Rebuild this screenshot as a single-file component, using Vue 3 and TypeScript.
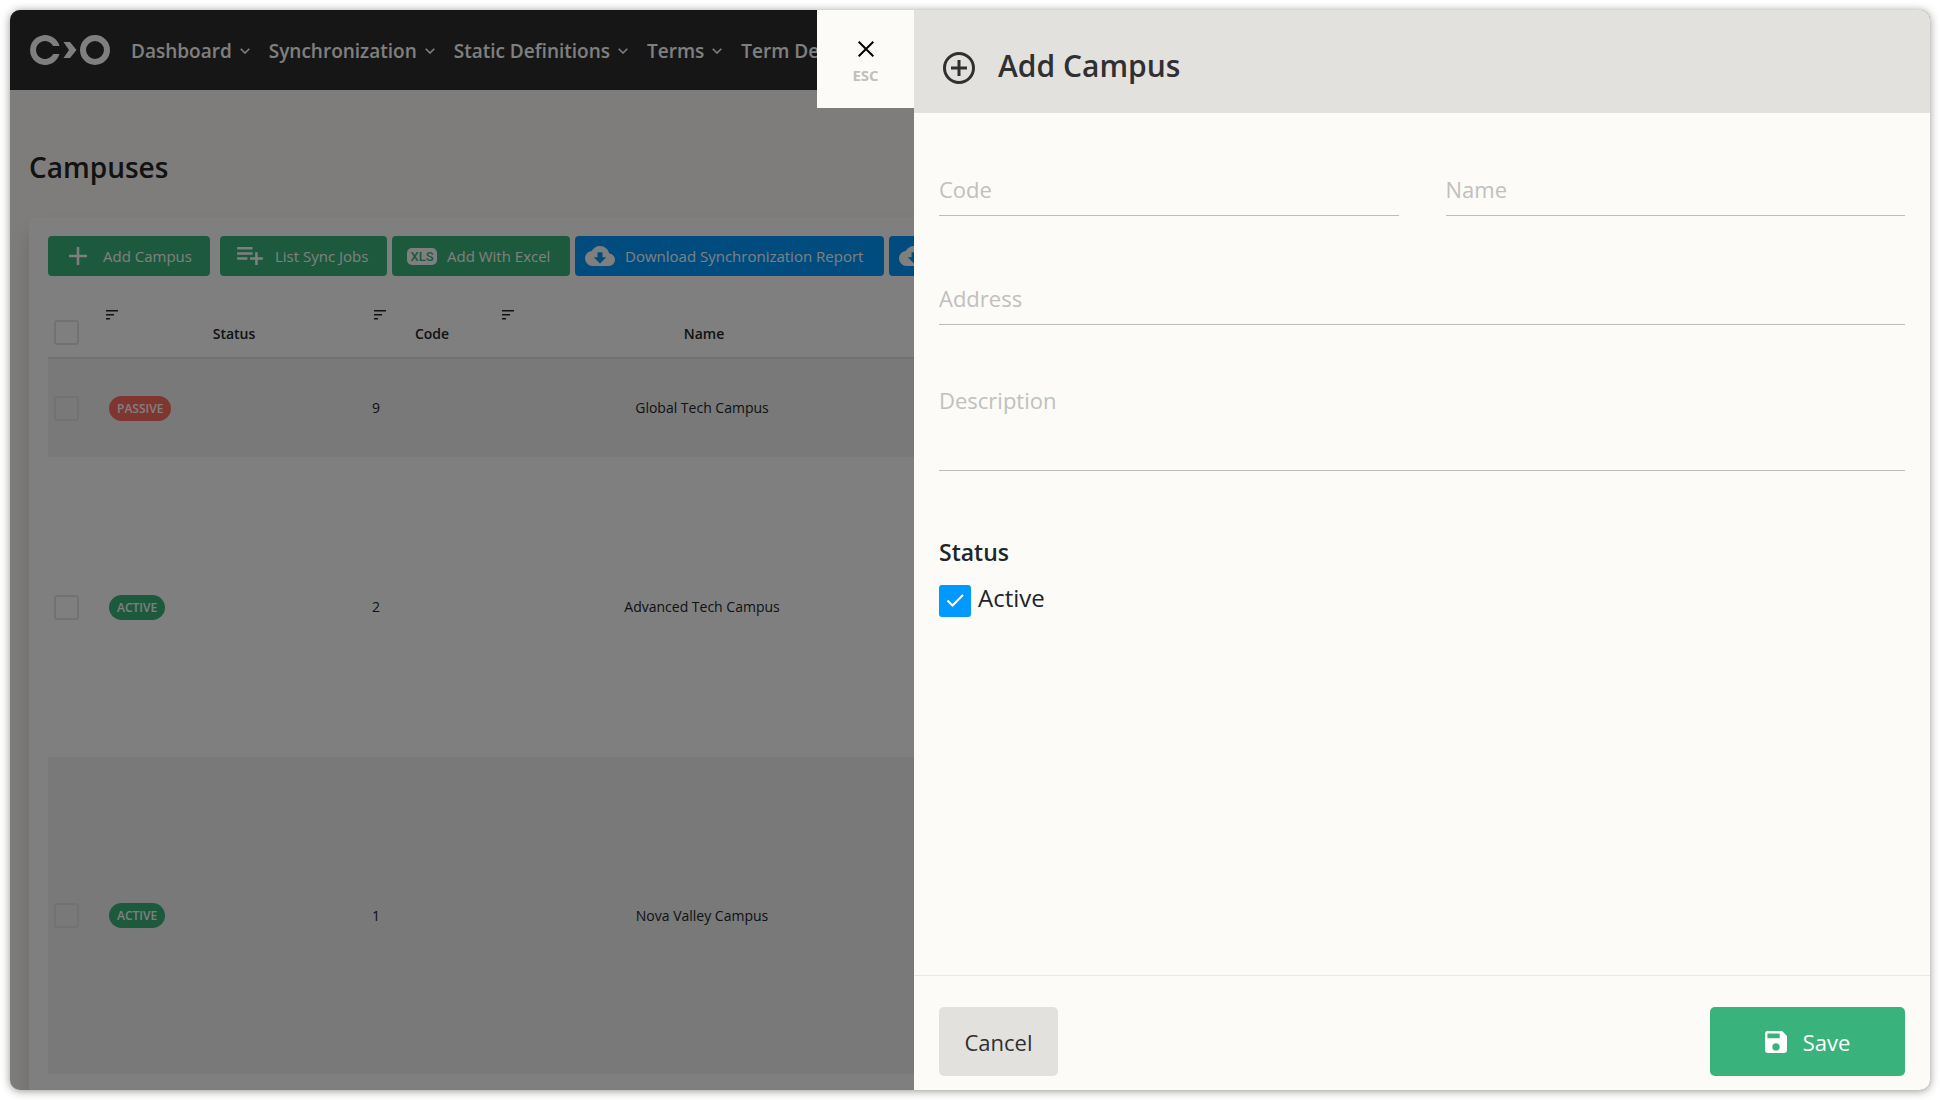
<script setup lang="ts">
import { ref } from 'vue'

interface Campus {
  active: boolean
  code: string
  name: string
  size: 'short' | 'medium' | 'tall'
}

const navItems: string[] = ['Dashboard', 'Synchronization', 'Static Definitions', 'Terms']
const columns: string[] = ['Status', 'Code', 'Name']
const campuses: Campus[] = [
  { active: false, code: '9', name: 'Global Tech Campus', size: 'short' },
  { active: true, code: '2', name: 'Advanced Tech Campus', size: 'medium' },
  { active: true, code: '1', name: 'Nova Valley Campus', size: 'tall' },
]

const code = ref('')
const name = ref('')
const address = ref('')
const description = ref('')
const isActive = ref(true)
</script>

<template>
  <div class="window">
    <div class="page">
      <header class="navbar">
        <a class="logo" href="#" aria-label="Home">
          <svg width="80" height="30" viewBox="0 0 80 30" fill="currentColor">
            <path d="M29.5 11A15 15 0 1 0 29.5 19L23.1 19A9 9 0 1 1 23.1 11Z" />
            <path d="M33.5 7H40L46.5 15L40 23H33.5L39 15Z" />
            <circle cx="65" cy="15" r="12" fill="none" stroke="currentColor" stroke-width="6" />
          </svg>
        </a>
        <nav class="menu">
          <a v-for="item in navItems" :key="item" class="menu-item" href="#">
            {{ item }}
            <svg width="10" height="6" viewBox="0 0 10 6" fill="none" stroke="currentColor" stroke-width="1.6">
              <path d="M0.7 0.7L5 5L9.3 0.7" />
            </svg>
          </a>
          <a class="menu-item" href="#">Term De</a>
        </nav>
      </header>

      <main class="content">
        <h1 class="page-title">Campuses</h1>
        <section class="card">
          <div class="toolbar">
            <button class="tool green add" type="button">
              <span class="tool-icon">
                <svg width="18" height="18" viewBox="0 0 18 18" fill="none" stroke="currentColor" stroke-width="2.6">
                  <path d="M9 0V18M0 9H18" />
                </svg>
              </span>
              Add Campus
            </button>
            <button class="tool green jobs" type="button">
              <span class="tool-icon">
                <svg width="26" height="18" viewBox="2 6 20 14" fill="currentColor">
                  <path d="M2,16H10V14H2M18,14V10H16V14H12V16H16V20H18V16H22V14M14,6H2V8H14M14,10H2V12H14V10Z" />
                </svg>
              </span>
              List Sync Jobs
            </button>
            <button class="tool green excel" type="button">
              <span class="tool-icon xls">XLS</span>
              Add With Excel
            </button>
            <button class="tool blue report" type="button">
              <span class="tool-icon">
                <svg width="30" height="20" viewBox="0 4 24 16" fill="currentColor">
                  <path d="M17,13L12,18L7,13H10V9H14V13M19.35,10.03C18.67,6.59 15.64,4 12,4C9.11,4 6.6,5.64 5.35,8.03C2.34,8.36 0,10.91 0,14A6,6 0 0,0 6,20H19A5,5 0 0,0 24,15C24,12.36 21.95,10.22 19.35,10.03Z" />
                </svg>
              </span>
              Download Synchronization Report
            </button>
            <button class="tool blue report" type="button" aria-label="Download">
              <span class="tool-icon">
                <svg width="30" height="20" viewBox="0 4 24 16" fill="currentColor">
                  <path d="M17,13L12,18L7,13H10V9H14V13M19.35,10.03C18.67,6.59 15.64,4 12,4C9.11,4 6.6,5.64 5.35,8.03C2.34,8.36 0,10.91 0,14A6,6 0 0,0 6,20H19A5,5 0 0,0 24,15C24,12.36 21.95,10.22 19.35,10.03Z" />
                </svg>
              </span>
            </button>
          </div>

          <table class="grid">
            <colgroup>
              <col class="col-check" />
              <col class="col-status" />
              <col class="col-code" />
              <col class="col-name" />
              <col />
            </colgroup>
            <thead>
              <tr>
                <th class="check-head"><input class="row-check" type="checkbox" aria-label="Select all" /></th>
                <th v-for="column in columns" :key="column">
                  <svg class="sort" width="12" height="10" viewBox="0 0 12 10" fill="currentColor">
                    <path d="M0 0H12V1.5H0ZM0 4H8V5.5H0ZM0 8H4V9.5H0Z" />
                  </svg>
                  <span class="head-label">{{ column }}</span>
                </th>
                <th></th>
              </tr>
            </thead>
            <tbody>
              <tr v-for="campus in campuses" :key="campus.code" :class="campus.size">
                <td class="check-cell"><input class="row-check" type="checkbox" :aria-label="campus.name" /></td>
                <td class="status-cell">
                  <span class="badge" :class="campus.active ? 'on' : 'off'">{{ campus.active ? 'ACTIVE' : 'PASSIVE' }}</span>
                </td>
                <td class="code-cell">{{ campus.code }}</td>
                <td class="name-cell">{{ campus.name }}</td>
                <td></td>
              </tr>
            </tbody>
          </table>
        </section>
      </main>
    </div>

    <div class="overlay">
      <button class="close" type="button">
        <svg width="16" height="16" viewBox="0 0 16 16" fill="none" stroke="#000" stroke-width="2">
          <path d="M0.7 0.7L15.3 15.3M15.3 0.7L0.7 15.3" />
        </svg>
        ESC
      </button>
      <form class="drawer" @submit.prevent>
        <header class="drawer-head">
          <svg class="drawer-icon" width="32" height="32" viewBox="0 0 32 32" fill="none" stroke="currentColor" stroke-width="3">
            <circle cx="16" cy="16" r="14.5" />
            <path d="M16 8V24M8 16H24" />
          </svg>
          <h2 class="drawer-title">Add Campus</h2>
        </header>
        <div class="drawer-body">
          <div class="field-row">
            <input v-model="code" class="field" type="text" placeholder="Code" aria-label="Code" />
            <input v-model="name" class="field" type="text" placeholder="Name" aria-label="Name" />
          </div>
          <input v-model="address" class="field" type="text" placeholder="Address" aria-label="Address" />
          <textarea v-model="description" class="field area" placeholder="Description" aria-label="Description"></textarea>
          <h3 class="group-title">Status</h3>
          <div class="toggle">
            <span class="toggle-box">
              <input id="active" v-model="isActive" type="checkbox" />
              <svg v-if="isActive" class="tick" width="32" height="32" viewBox="0 0 32 32" fill="none" stroke="#fff" stroke-width="2">
                <path d="M8.5 15.5L13.5 20.5L24 10" />
              </svg>
            </span>
            <label for="active">Active</label>
          </div>
        </div>
        <footer class="drawer-foot">
          <button class="action cancel" type="button">Cancel</button>
          <button class="action save" type="submit">
            <svg width="22" height="22" viewBox="3 3 18 18" fill="currentColor">
              <path d="M15,9H5V5H15M12,19A3,3 0 0,1 9,16A3,3 0 0,1 12,13A3,3 0 0,1 15,16A3,3 0 0,1 12,19M17,3H5C3.89,3 3,3.9 3,5V19A2,2 0 0,0 5,21H19A2,2 0 0,0 21,19V7L17,3Z" />
            </svg>
            Save
          </button>
        </footer>
      </form>
    </div>
  </div>
</template>

<style>
body {
  background: #fff;
}
</style>

<style scoped>
* {
  box-sizing: border-box;
}

button,
input,
textarea {
  font-family: inherit;
  margin: 0;
}

.window {
  position: relative;
  margin: 10px;
  height: calc(100vh - 20px);
  overflow: hidden;
  border-radius: 10px;
  background: #fcfaf6;
  box-shadow: 0 1px 9px rgba(40, 40, 30, 0.5);
  font-family: 'Open Sans', 'Noto Sans', sans-serif;
  color: #212529;
}

.page {
  display: flex;
  flex-direction: column;
  min-height: 100%;
}

.navbar {
  display: flex;
  align-items: center;
  gap: 21px;
  height: 80px;
  padding: 0 20px;
  background: #2c2c2c;
  color: #fff;
}

.logo {
  display: flex;
  color: inherit;
}

.menu {
  display: flex;
  gap: 19px;
  padding-top: 2px;
}

.menu-item {
  display: flex;
  align-items: center;
  gap: 8px;
  color: inherit;
  font-size: 19px;
  font-weight: 600;
  line-height: 28px;
  text-decoration: none;
  white-space: nowrap;
}

.content {
  display: flex;
  flex-direction: column;
  flex: 1;
  padding: 57px 19px 0;
}

.page-title {
  margin: 0 0 30px;
  font-size: 28px;
  font-weight: 600;
  line-height: 40px;
}

.card {
  flex: 1;
  padding: 19px 19px 16px;
  border-radius: 6px 6px 0 0;
  background: #fff;
  box-shadow: 0 16px 20px rgba(0, 0, 0, 0.15);
}

.toolbar {
  display: flex;
  gap: 5px;
}

.tool {
  display: flex;
  align-items: center;
  flex: none;
  gap: 10px;
  height: 40px;
  padding: 0 15px;
  border: 0;
  border-radius: 4px;
  color: #fff;
  font-size: 15px;
  white-space: nowrap;
}

.tool-icon {
  display: flex;
  justify-content: center;
  width: 30px;
}

.xls {
  border-radius: 5px;
  background: #fff;
  color: #3ab27b;
  font-family: Roboto, sans-serif;
  font-size: 13px;
  font-weight: 500;
  line-height: 17px;
}

.green {
  background: #3ab27b;
}

.blue {
  background: #0099ff;
}

.add {
  min-width: 162px;
  margin-right: 5px;
}

.jobs {
  min-width: 167px;
}

.excel {
  min-width: 178px;
}

.report {
  min-width: 309px;
  padding-left: 10px;
}

.grid {
  width: 100%;
  table-layout: fixed;
  border-collapse: separate;
  border-spacing: 0;
  font-size: 14px;
}

.col-check {
  width: 50px;
}

.col-status {
  width: 268px;
}

.col-code {
  width: 128px;
}

.col-name {
  width: 416px;
}

.grid th {
  height: 83px;
  padding: 34px 4px 0 8px;
  border-bottom: 2px solid #dee2e6;
  font-weight: 600;
  text-align: center;
  vertical-align: top;
}

.grid .check-head {
  padding: 44px 0 0 6px;
  text-align: left;
}

.sort {
  display: block;
  margin-bottom: 4px;
}

.head-label {
  display: block;
  line-height: 20px;
}

.grid td {
  padding: 0;
  line-height: 20px;
  vertical-align: middle;
}

.grid tbody tr:nth-child(odd) {
  background: #f2f2f2;
}

.short {
  height: 98px;
}

.medium {
  height: 300px;
}

.tall {
  height: 317px;
}

.grid .check-cell {
  padding-left: 6px;
}

.grid .status-cell {
  padding-left: 11px;
}

.grid .code-cell {
  padding-left: 6px;
}

.grid .name-cell {
  text-align: center;
}

.row-check {
  display: block;
  width: 25px;
  height: 25px;
  appearance: none;
  border: 2px solid #e4e4e4;
  border-radius: 3px;
}

.badge {
  display: block;
  width: fit-content;
  padding: 0 8px;
  border-radius: 13px;
  color: #fff;
  font-size: 12px;
  font-weight: 600;
  line-height: 25px;
}

.on {
  background: #3ab27b;
}

.off {
  background: #ff6b60;
}

.overlay {
  position: absolute;
  inset: 0;
  display: grid;
  grid-template-columns: 904fr 1016fr;
  align-items: start;
  background: rgba(0, 0, 0, 0.5);
}

.close {
  display: flex;
  flex-direction: column;
  align-items: center;
  justify-self: end;
  gap: 8px;
  width: 97px;
  height: 98px;
  padding: 31px 0 0;
  border: 0;
  background: #fcfbf7;
  color: #c0c0bd;
  font-size: 15px;
  font-weight: 700;
  line-height: 20px;
}

.drawer {
  display: flex;
  flex-direction: column;
  height: 100%;
  background: #fcfbf7;
}

.drawer-head {
  display: flex;
  align-items: center;
  gap: 23px;
  height: 103px;
  padding: 8px 29px 0;
  background: #e2e1dd;
  color: #303030;
}

.drawer-icon {
  margin-top: 4px;
}

.drawer-title {
  margin: 0;
  font-size: 30px;
  font-weight: 600;
  line-height: 40px;
}

.drawer-body {
  display: flex;
  flex-direction: column;
  flex: 1;
  padding: 51px 25px 0;
}

.field-row {
  display: grid;
  grid-template-columns: 1fr 1fr;
  gap: 47px;
}

.field {
  display: block;
  width: 100%;
  height: 52px;
  padding: 0 0 2px;
  border: 0;
  border-bottom: 1px solid #bcbcba;
  border-radius: 0;
  outline: 0;
  background: transparent;
  color: #212529;
  font-size: 22px;
  line-height: 30px;
}

.field::placeholder {
  color: #c0c0be;
  opacity: 1;
}

.drawer-body > .field {
  margin-top: 57px;
}

.drawer-body > .area {
  height: 89px;
  padding-top: 3px;
  resize: none;
}

.group-title {
  margin: 65px 0 17px;
  font-size: 23px;
  font-weight: 600;
  line-height: 32px;
}

.toggle {
  display: flex;
  gap: 7px;
  font-size: 24px;
  line-height: 26px;
}

.toggle-box {
  position: relative;
  width: 32px;
  height: 32px;
}

.toggle-box input {
  display: block;
  width: 32px;
  height: 32px;
  appearance: none;
  border: 2px solid #c0c0be;
  border-radius: 3px;
}

.toggle-box input:checked {
  border-color: #0099ff;
  background: #0099ff;
}

.tick {
  position: absolute;
  inset: 0;
  pointer-events: none;
}

.drawer-foot {
  display: flex;
  justify-content: space-between;
  padding: 31px 25px 14px;
  border-top: 1px solid #e9e9ed;
}

.action {
  display: flex;
  align-items: center;
  justify-content: center;
  gap: 16px;
  height: 69px;
  border: 0;
  border-radius: 5px;
  font-size: 22px;
}

.cancel {
  min-width: 119px;
  background: #e2e1dd;
  color: #303030;
}

.save {
  min-width: 195px;
  background: #3ab27b;
  color: #fff;
}
</style>
